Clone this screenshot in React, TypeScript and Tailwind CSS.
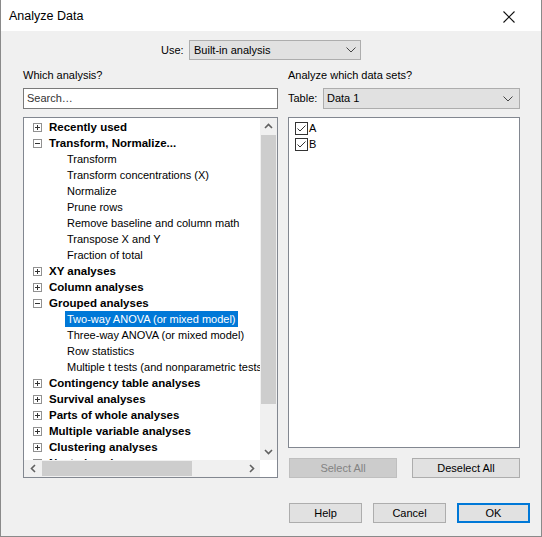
import React from "react";

type Row = { t: string; k?: "p" | "m"; sel?: boolean };

const rows: Row[] = [
  { t: "Recently used", k: "p" },
  { t: "Transform, Normalize...", k: "m" },
  { t: "Transform" },
  { t: "Transform concentrations (X)" },
  { t: "Normalize" },
  { t: "Prune rows" },
  { t: "Remove baseline and column math" },
  { t: "Transpose X and Y" },
  { t: "Fraction of total" },
  { t: "XY analyses", k: "p" },
  { t: "Column analyses", k: "p" },
  { t: "Grouped analyses", k: "m" },
  { t: "Two-way ANOVA (or mixed model)", sel: true },
  { t: "Three-way ANOVA (or mixed model)" },
  { t: "Row statistics" },
  { t: "Multiple t tests (and nonparametric tests)" },
  { t: "Contingency table analyses", k: "p" },
  { t: "Survival analyses", k: "p" },
  { t: "Parts of whole analyses", k: "p" },
  { t: "Multiple variable analyses", k: "p" },
  { t: "Clustering analyses", k: "p" },
  { t: "Nested analyses", k: "p" },
];

function Expander({ plus }: { plus: boolean }) {
  return (
    <svg width="9" height="9" viewBox="0 0 9 9" className="shrink-0">
      <rect x="0.5" y="0.5" width="8" height="8" fill="#fff" stroke="#919191" />
      <line x1="2" y1="4.5" x2="7" y2="4.5" stroke="#333" />
      {plus && <line x1="4.5" y1="2" x2="4.5" y2="7" stroke="#333" />}
    </svg>
  );
}

function Chevron({ dir, color = "#606060" }: { dir: "up" | "down" | "left" | "right"; color?: string }) {
  const d =
    dir === "up"
      ? "M1 6 L4.5 2.5 L8 6"
      : dir === "down"
      ? "M1 3 L4.5 6.5 L8 3"
      : dir === "left"
      ? "M6 1 L2.5 4.5 L6 8"
      : "M3 1 L6.5 4.5 L3 8";
  return (
    <svg width="9" height="9" viewBox="0 0 9 9">
      <path d={d} fill="none" stroke={color} strokeWidth="1.6" />
    </svg>
  );
}

function DropArrow() {
  return (
    <svg width="10" height="6" viewBox="0 0 10 6">
      <path d="M0.5 0.5 L5 5 L9.5 0.5" fill="none" stroke="#444" strokeWidth="1" />
    </svg>
  );
}

function Check() {
  return (
    <svg width="13" height="13" viewBox="0 0 13 13" className="shrink-0">
      <rect x="0.5" y="0.5" width="12" height="12" fill="#fff" stroke="#333" />
      <path d="M2.5 6.5 L5 9 L10.5 3.5" fill="none" stroke="#333" strokeWidth="1" />
    </svg>
  );
}

function Btn({ children, w, disabled, def }: { children: React.ReactNode; w: string; disabled?: boolean; def?: boolean }) {
  if (disabled)
    return (
      <div className={`${w} h-[20px] flex items-center justify-center bg-[#cccccc] border border-[#bfbfbf] text-[#838383]`}>
        {children}
      </div>
    );
  if (def)
    return (
      <div className={`${w} h-[20px] flex items-center justify-center bg-[#e1e1e1] border-2 border-[#0078d7] text-black`}>
        {children}
      </div>
    );
  return (
    <div className={`${w} h-[20px] flex items-center justify-center bg-[#e1e1e1] border border-[#adadad] text-black`}>
      {children}
    </div>
  );
}

export default function App() {
  return (
    <div
      className="w-[542px] h-[537px] flex flex-col border-x border-b border-[#8a8a8a] text-[11px] text-black bg-[#f0f0f0] overflow-hidden"
      style={{ fontFamily: '"Liberation Sans", Arial, sans-serif' }}
    >
      {/* Title bar */}
      <div className="h-[31px] bg-white flex items-center justify-between pl-[8px] pr-[26px] pt-[2px] shrink-0">
        <span className="text-[12.5px] text-black">Analyze Data</span>
        <svg width="12" height="12" viewBox="0 0 12 12">
          <path d="M0.5 0.5 L11.5 11.5 M11.5 0.5 L0.5 11.5" stroke="#111" strokeWidth="1.1" />
        </svg>
      </div>

      {/* Use row */}
      <div className="flex items-center pt-[9px] ml-[160px] h-[29px] shrink-0">
        <span className="w-[28px]">Use:</span>
        <div className="w-[172px] h-[20px] bg-[#e1e1e1] border border-[#adadad] flex items-center justify-between pl-[4px] pr-[4px]">
          <span>Built-in analysis</span>
          <DropArrow />
        </div>
      </div>

      {/* Columns */}
      <div className="flex ml-[22px] mt-[7px] gap-[10px]">
        {/* Left */}
        <div className="w-[255px] flex flex-col">
          <div className="h-[16px] flex items-center">Which analysis?</div>
          <div className="mt-[5px] h-[21px] bg-white border border-[#7a7a7a] flex items-center pl-[3px] text-[#333]">
            Search…
          </div>
          <div className="mt-[8px] h-[361px] border border-[#828790] bg-white flex flex-col">
            <div className="flex flex-1 min-h-0">
              <div className="flex-1 overflow-hidden pt-[1px]">
                {rows.map((r, i) => (
                  <div key={i} className="h-[16px] flex items-center whitespace-nowrap">
                    {r.k ? (
                      <>
                        <div className="ml-[9px] flex items-center pt-[1px]">
                          <Expander plus={r.k === "p"} />
                        </div>
                        <span className="ml-[7px] font-bold text-[11.5px] pt-[2px]">{r.t}</span>
                      </>
                    ) : r.sel ? (
                      <span className="ml-[41px] h-[16px] flex items-center px-[2px] bg-[#0078d7] text-white">{r.t}</span>
                    ) : (
                      <span className="ml-[43px]">{r.t}</span>
                    )}
                  </div>
                ))}
              </div>
              <div className="w-[17px] bg-[#f0f0f0] flex flex-col">
                <div className="h-[17px] flex items-center justify-center">
                  <Chevron dir="up" />
                </div>
                <div className="h-[269px] mx-[1px] bg-[#cdcdcd]" />
                <div className="flex-1" />
                <div className="h-[17px] flex items-center justify-center">
                  <Chevron dir="down" />
                </div>
              </div>
            </div>
            <div className="h-[17px] flex shrink-0">
              <div className="flex-1 bg-[#f0f0f0] flex items-center">
                <div className="w-[18px] flex items-center justify-center">
                  <Chevron dir="left" />
                </div>
                <div className="w-[150px] h-[15px] bg-[#cdcdcd]" />
                <div className="flex-1" />
                <div className="w-[18px] flex items-center justify-center">
                  <Chevron dir="right" />
                </div>
              </div>
              <div className="w-[17px] bg-white" />
            </div>
          </div>
        </div>

        {/* Right */}
        <div className="w-[232px] flex flex-col">
          <div className="h-[16px] flex items-center">Analyze which data sets?</div>
          <div className="mt-[5px] h-[21px] flex items-center">
            <span className="w-[35px]">Table:</span>
            <div className="flex-1 h-[21px] bg-[#e1e1e1] border border-[#adadad] flex items-center justify-between pl-[3px] pr-[6px]">
              <span>Data 1</span>
              <DropArrow />
            </div>
          </div>
          <div className="mt-[8px] h-[331px] bg-white border border-[#828790] pt-[2px] pl-[6px]">
            <div className="h-[16px] flex items-center gap-[1px]">
              <Check />
              <span>A</span>
            </div>
            <div className="h-[16px] flex items-center gap-[1px]">
              <Check />
              <span>B</span>
            </div>
          </div>
          <div className="mt-[10px] flex justify-between pl-[1px]">
            <Btn w="w-[108px]" disabled>
              Select All
            </Btn>
            <Btn w="w-[108px]">Deselect All</Btn>
          </div>
        </div>
      </div>

      {/* Bottom buttons */}
      <div className="mt-[25px] flex justify-end gap-[11px] pr-[11px]">
        <Btn w="w-[73px]">Help</Btn>
        <Btn w="w-[73px]">Cancel</Btn>
        <Btn w="w-[73px]" def>
          OK
        </Btn>
      </div>
    </div>
  );
}
